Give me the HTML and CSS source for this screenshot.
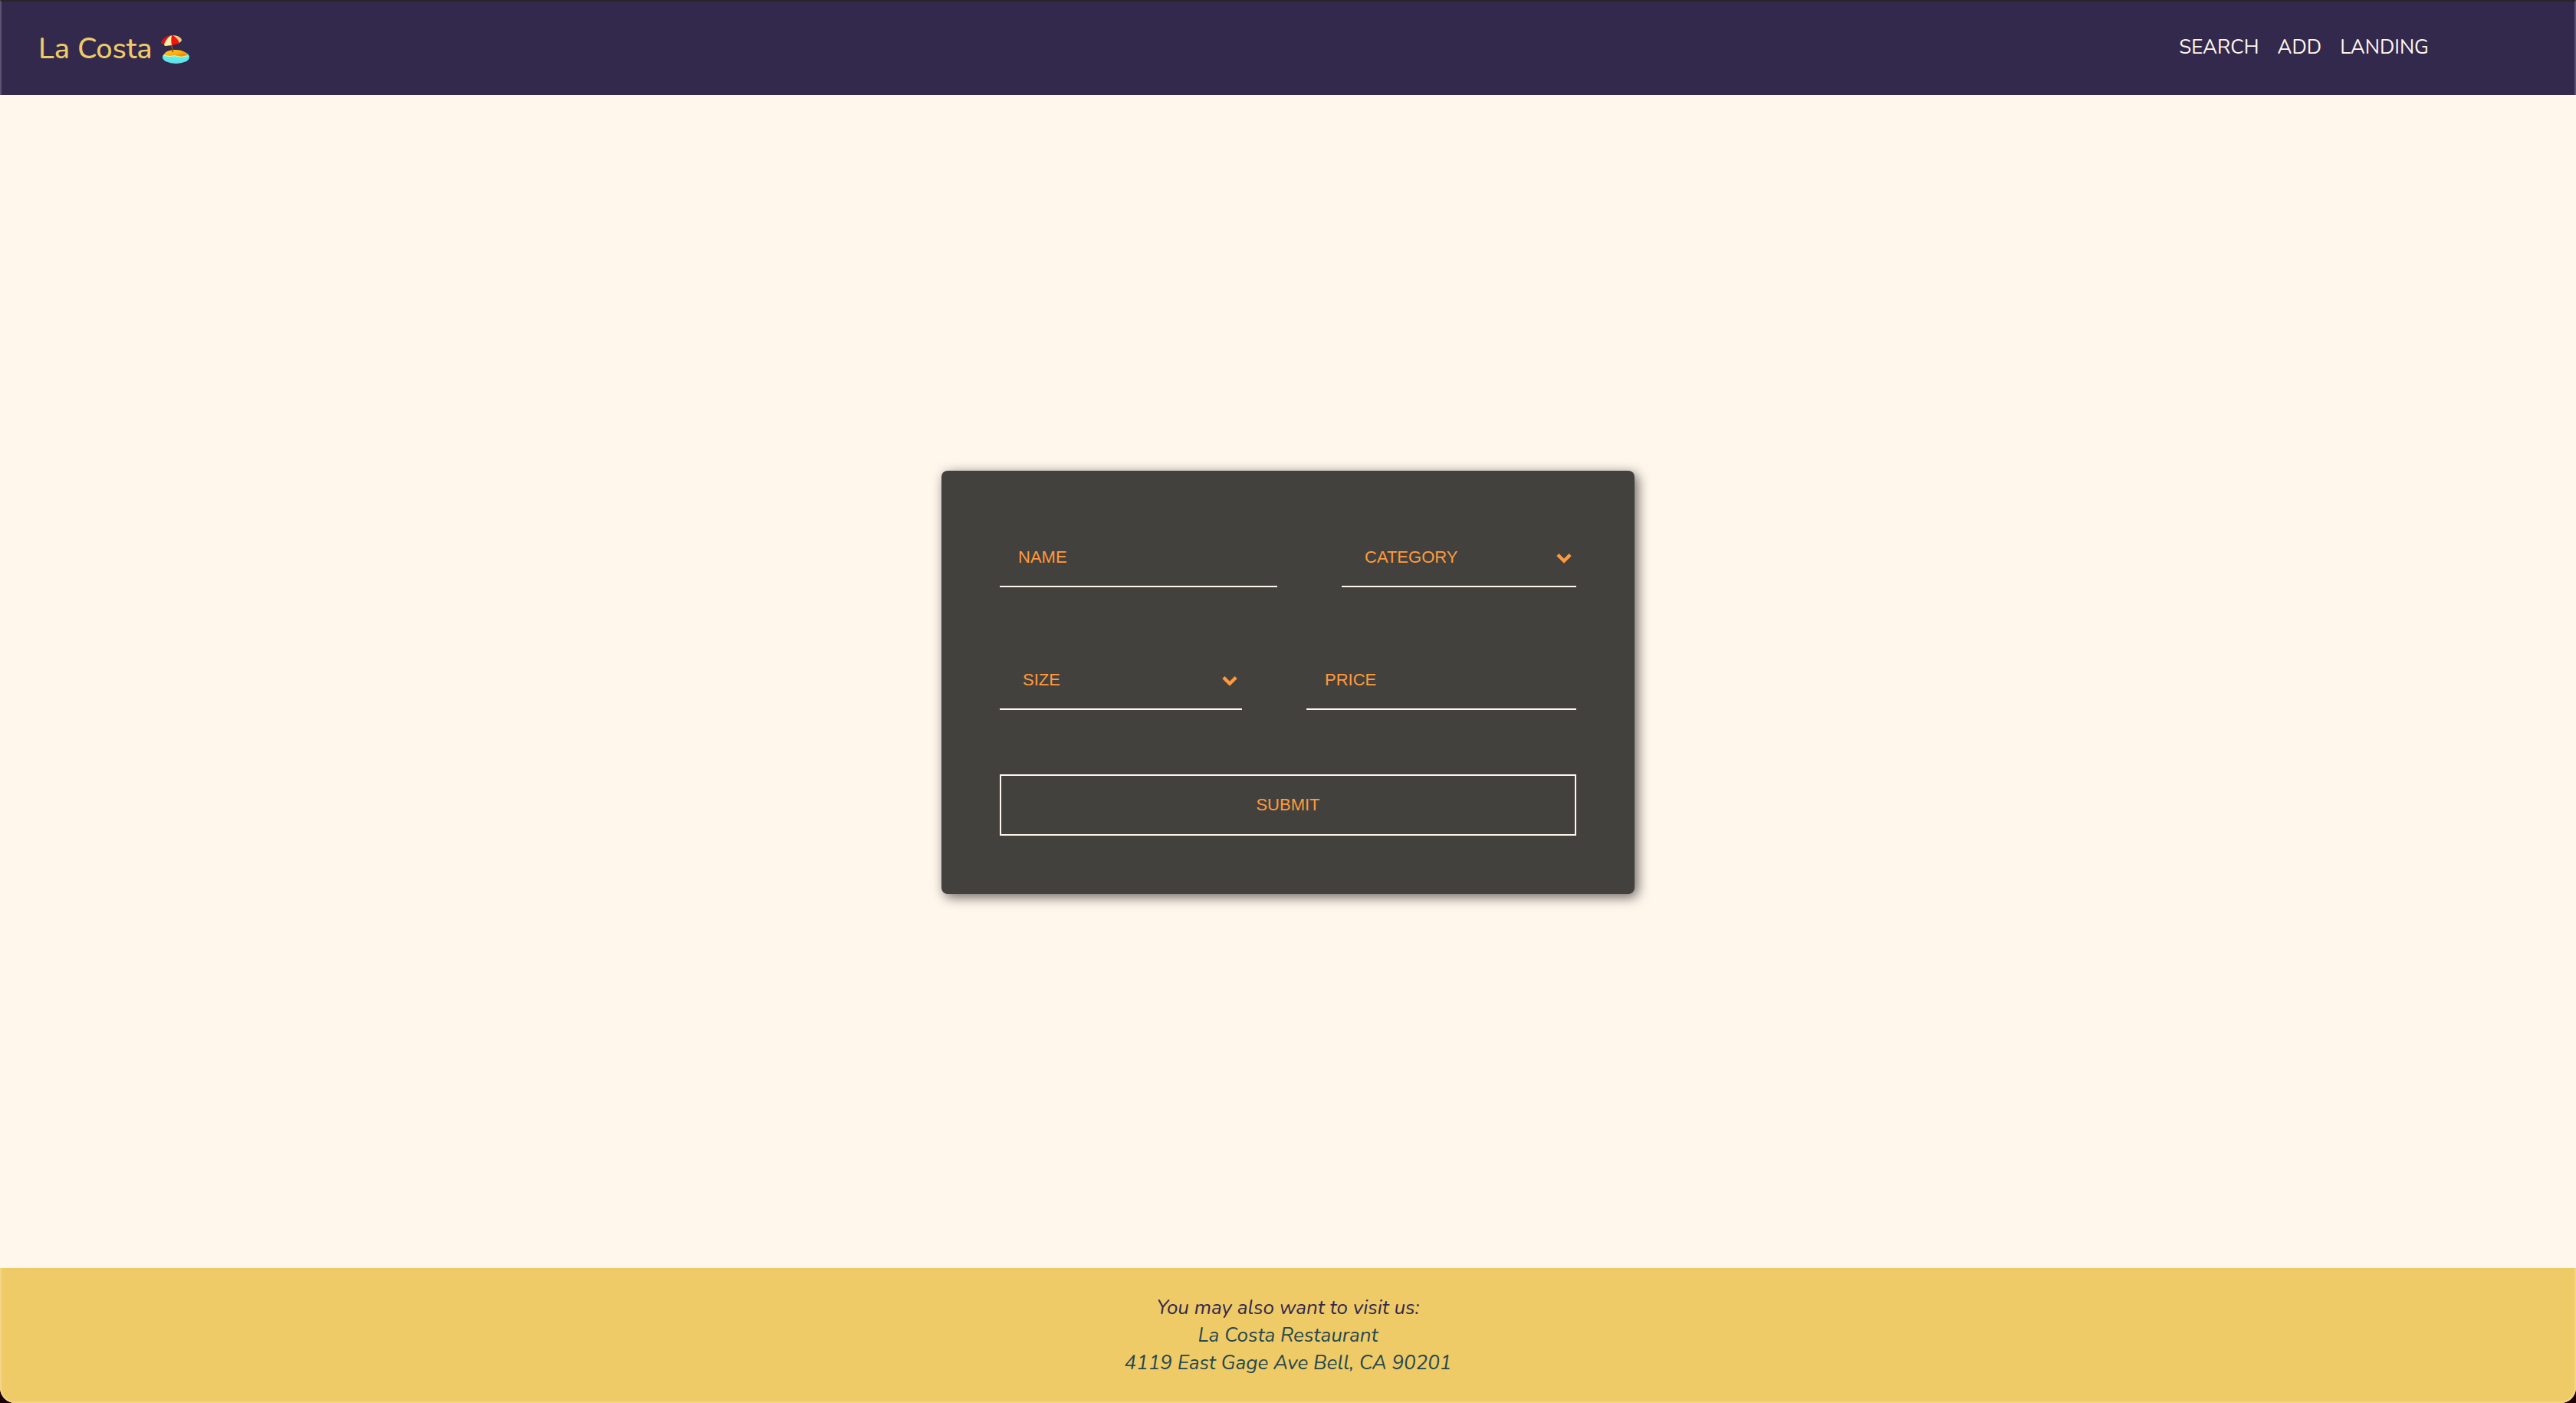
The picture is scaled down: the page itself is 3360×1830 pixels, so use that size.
FILE: index.html
```html
<!DOCTYPE html>
<html lang="en">
<head>
  <meta charset="utf-8">
  <meta name="viewport" content="width=device-width, initial-scale=1">
  <title>La Costa</title>
  <link rel="stylesheet" href="styles.css">
</head>
<body>
  <div class="app">
    <header class="header">
      <a class="brand" href="#">
        <span>La Costa</span>
        <svg class="brand-icon" viewBox="0 0 38 38" aria-hidden="true">
          <defs>
            <linearGradient id="sand" x1="0" y1="0" x2="1" y2="1">
              <stop offset="0" stop-color="#ffd21c"/>
              <stop offset="0.5" stop-color="#ffae10"/>
              <stop offset="1" stop-color="#d87a08"/>
            </linearGradient>
            <linearGradient id="sea" x1="0" y1="0" x2="0" y2="1">
              <stop offset="0" stop-color="#9cf5ee"/>
              <stop offset="0.6" stop-color="#4ff2f0"/>
              <stop offset="1" stop-color="#78cfe0"/>
            </linearGradient>
          </defs>
          <ellipse cx="20.500" cy="29.500" rx="17.500" ry="8.500" fill="url(#sea)"/>
          <path d="M5 27C6 22 12 20 20 20s15 3 16 8c-4-1-6 2-10 1-4 0-5-2-10-1-4 1-8 0-11-1Z" fill="url(#sand)"/>
          <path d="M5 27c3 1 7 2 11 1 5-1 6 1 10 1 4 1 6-2 10-1" fill="none" stroke="#fff0a0" stroke-width="1"/>
          <path d="M14.500 12l2 11" stroke="#8f4a20" stroke-width="1.600"/>
          <path d="M1 11C3 5 9 1 16 1c6 0 12 3 12 7l-3 3-2 1-8 2-9 1-1-2Z" fill="#f5120f"/>
          <path d="M1 11C4 5 9 2 15 1 10 4 7 9 6 14l-1-1Z" fill="#d91310"/>
          <path d="M5 13C7 8 10 3 15 1c-1 4-1 9 0 13l-9 1Z" fill="#fff0a6"/>
          <path d="M16 1c7 0 12 3 12 7l-3 3C23 6 20 3 16 1Z" fill="#e3cf80"/>
        </svg>
      </a>
      <nav class="nav">
        <a href="#search">SEARCH</a>
        <a href="#add">ADD</a>
        <a href="#landing">LANDING</a>
      </nav>
    </header>

    <main class="main">
      <form class="card">
        <div class="row row-first">
          <input class="control" type="text" placeholder="NAME" aria-label="Name">
          <div class="select">
            <select class="control" aria-label="Category">
              <option>CATEGORY</option>
            </select>
            <svg class="chevron" viewBox="0 0 18 12" aria-hidden="true"><path d="M1.500 1.500 9 9l7.500-7.500"/></svg>
          </div>
        </div>
        <div class="row row-second">
          <div class="select">
            <select class="control" aria-label="Size">
              <option>SIZE</option>
            </select>
            <svg class="chevron" viewBox="0 0 18 12" aria-hidden="true"><path d="M1.500 1.500 9 9l7.500-7.500"/></svg>
          </div>
          <input class="control" type="text" placeholder="PRICE" aria-label="Price">
        </div>
        <button class="submit" type="submit">SUBMIT</button>
      </form>
    </main>

    <footer class="footer">
      <p class="footer-lead">You may also want to visit us:</p>
      <address class="address">La Costa Restaurant<br>4119 East Gage Ave Bell, CA 90201</address>
    </footer>
  </div>
</body>
</html>
```

FILE: styles.css
```css
* {
  box-sizing: border-box;
}

body {
  margin: 0;
  background: #1c0008;
  font-family: Nunito, Lato, sans-serif;
  font-size: 26px;
  line-height: 36px;
}

.app {
  position: relative;
  display: flex;
  flex-direction: column;
  min-height: 100vh;
  overflow: hidden;
  border-radius: 0 0 20px 20px;
  background: #fff6ec;
}

/* hairline edge round the whole window */
.app::after {
  content: "";
  position: absolute;
  inset: 0;
  border: 2px solid rgba(255, 255, 255, 0.2);
  border-top-color: #262626;
  border-radius: inherit;
  pointer-events: none;
}

.header {
  display: flex;
  align-items: center;
  justify-content: space-between;
  min-height: 124px;
  padding: 0 192px 0 50px;
  background: #32294d;
}

.brand {
  display: flex;
  align-items: center;
  gap: 10px;
  padding-top: 4px;
  color: #efcb68;
  font-size: 38px;
  line-height: 56px;
  font-weight: 500;
  text-decoration: none;
}

.brand-icon {
  width: 38px;
  height: 38px;
}

.nav {
  display: flex;
  gap: 24px;
}

.nav a {
  color: #fff6ec;
  text-decoration: none;
}

.main {
  flex: 1;
  display: flex;
  align-items: center;
  justify-content: center;
  padding-top: 2px;
}

.card {
  display: flex;
  flex-direction: column;
  gap: 84px;
  width: 100%;
  max-width: 904px;
  padding: 76px;
  border-radius: 8px;
  background: #43413e;
  box-shadow: 4px 4px 16px rgba(0, 0, 0, 0.6);
}

.row {
  display: grid;
  gap: 84px;
}

.row-first {
  grid-template-columns: minmax(0, 362fr) minmax(0, 306fr);
}

.row-second {
  grid-template-columns: minmax(0, 316fr) minmax(0, 352fr);
}

.control,
.submit {
  font-family: "Liberation Sans", Arial, sans-serif;
  font-size: 22px;
  line-height: 26px;
  color: #ff9b3d;
  background: transparent;
  border: 0 solid #fff6ec;
  border-radius: 0;
  outline: 0;
}

.control {
  width: 100%;
  min-width: 0;
  height: 76px;
  padding: 24px;
  border-bottom-width: 2px;
  appearance: none;
}

.control::placeholder {
  color: inherit;
  opacity: 1;
}

.select {
  display: grid;
  align-items: center;
}

.select > * {
  grid-area: 1 / 1;
}

.select .control {
  padding: 24px 30px;
}

.chevron {
  justify-self: end;
  width: 20px;
  height: 13px;
  margin-right: 6px;
  fill: none;
  stroke: #ff9b3d;
  stroke-width: 4;
  pointer-events: none;
}

.submit {
  height: 80px;
  border-width: 2px;
}

.footer {
  padding: 34px;
  background: #efcb68;
  color: #26484e;
  font-style: italic;
  text-align: center;
}

.footer-lead {
  margin: 0;
  color: #32294d;
}
```
